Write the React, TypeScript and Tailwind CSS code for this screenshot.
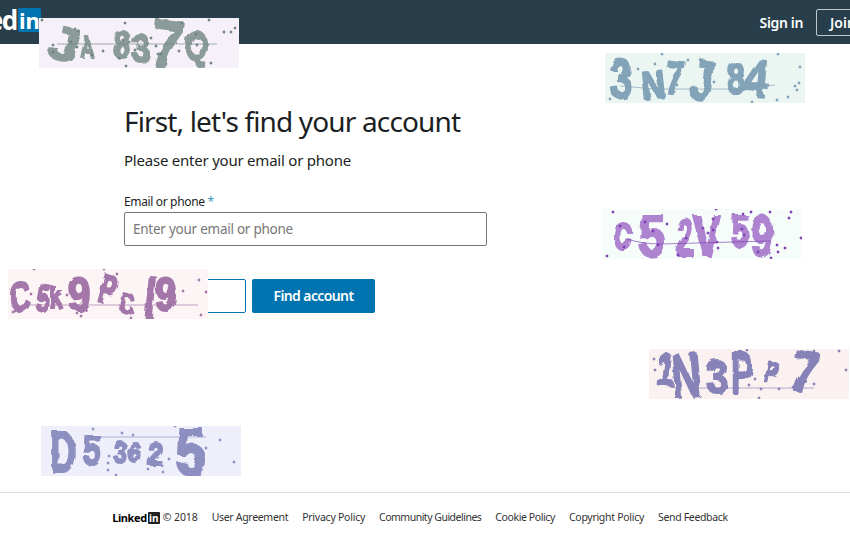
const captchaFont = "'Liberation Sans', sans-serif"

type Glyph = [string, number, number, number, number?, number?]
type Dot = [number, number]

type CaptchaProps = {
  seed: number
  className: string
  bg: string
  ink: string
  dotInk: string
  glyphs: Glyph[]
  line: string
  dots: Dot[]
}

function Captcha({ seed, className, bg, ink, dotInk, glyphs, line, dots }: CaptchaProps) {
  const warpId = `warp-${seed}`
  return (
    <div className={`absolute h-[50px] w-[200px] ${className}`}>
      <svg width="200" height="50" viewBox="0 0 200 50" className="block">
        <defs>
          <filter id={warpId} x="-10%" y="-10%" width="120%" height="120%">
            <feTurbulence type="fractalNoise" baseFrequency="0.07" numOctaves="2" seed={seed} />
            <feDisplacementMap in="SourceGraphic" scale="6" />
            <feGaussianBlur stdDeviation="0.35" />
          </filter>
        </defs>
        <rect width="200" height="50" fill={bg} />
        <g filter={`url(#${warpId})`}>
          {glyphs.map(([ch, x, y, size, rot = 0, sx = 1], i) => (
            <text
              key={i}
              transform={`translate(${x} ${y}) rotate(${rot}) scale(${sx} 1)`}
              fontFamily={captchaFont}
              fontWeight="700"
              fontSize={size}
              textAnchor="middle"
              fill={ink}
              stroke={ink}
              strokeWidth="2.2"
              strokeLinejoin="round"
            >
              {ch}
            </text>
          ))}
        </g>
        <path d={line} fill="none" stroke={dotInk} strokeWidth="1" opacity="0.65" />
        {dots.map(([x, y], i) => (
          <rect key={i} x={x - 1.2} y={y - 1.2} width="2.4" height="2.4" fill={dotInk} transform={`rotate(45 ${x} ${y})`} />
        ))}
      </svg>
    </div>
  )
}

const footerLinks = [
  { label: "User Agreement", tracking: "tracking-[-0.31px]" },
  { label: "Privacy Policy", tracking: "tracking-[-0.24px]" },
  { label: "Community Guidelines", tracking: "tracking-[-0.5px]" },
  { label: "Cookie Policy", tracking: "tracking-[-0.4px]" },
  { label: "Copyright Policy", tracking: "tracking-[-0.29px]" },
  { label: "Send Feedback", tracking: "tracking-[-0.33px]" },
]

export default function App() {
  return (
    <div className="relative flex h-[540px] w-[850px] flex-col overflow-hidden bg-white font-['Noto_Sans',sans-serif] text-[#1b1f23]">
      <header className="flex h-[44px] shrink-0 items-center bg-[#283e4a]">
        <div className="mb-[4px] ml-[-62px] flex items-center">
          <span className="text-[26px] leading-none font-bold tracking-[-1.4px] text-white">Linked</span>
          <span className="ml-[1px] flex h-[24px] w-[23px] items-center justify-center rounded-[2px] bg-[#0073b1] text-[22px] leading-none font-bold text-white">
            in
          </span>
        </div>
        <nav className="ml-auto flex items-center">
          <a className="mr-[13px] text-[14px] font-semibold tracking-[-0.35px] text-white">Sign in</a>
          <a className="mr-[-60px] flex h-[27px] w-[94px] items-center justify-start rounded-[2px] border border-[#c0c8cc] pl-[13px] text-[14px] font-semibold whitespace-nowrap text-white">
            Join now
          </a>
        </nav>
      </header>

      <main className="flex-1 pt-[59px] pl-[124px]">
        <h1 className="text-[28px] leading-[36px] tracking-[-0.85px] text-[#1b1f23]">First, let's find your account</h1>
        <p className="mt-[11px] text-[15px] leading-[20px] tracking-[-0.225px]">Please enter your email or phone</p>
        <label className="mt-[24px] block text-[12px] leading-[16px] tracking-[-0.35px]">
          Email or phone <span className="text-[#3b94c4]">*</span>
        </label>
        <input
          placeholder="Enter your email or phone"
          className="mt-[2px] block h-[34px] w-[363px] rounded-[2px] border border-[#777] px-[8px] text-[13.5px] tracking-[-0.25px] placeholder:text-[#777]"
        />
        <div className="mt-[33px] flex gap-[6px]">
          <button className="h-[34px] w-[122px] rounded-[2px] border border-[#0073b1] text-[14px] font-semibold text-[#0073b1]">
            Back
          </button>
          <button className="h-[34px] w-[123px] rounded-[2px] bg-[#0073b1] pb-[2px] text-[14px] font-semibold tracking-[-0.6px] text-white">
            Find account
          </button>
        </div>
      </main>

      <footer className="flex h-[48px] shrink-0 items-center justify-center gap-[14px] border-t border-[#dddddd] pt-[2px] pr-[10px] text-[10.5px] tracking-[-0.1px] text-[#333]">
        <div className="flex items-center gap-[3px]">
          <div className="flex items-center">
            <span className="text-[11px] leading-none font-bold tracking-[-0.4px] text-black">Linked</span>
            <span className="ml-[1px] flex h-[12px] w-[12px] items-center justify-center rounded-[1px] bg-[#222] text-[10px] leading-none font-bold text-white">
              in
            </span>
          </div>
          <span>© 2018</span>
        </div>
        {footerLinks.map((link) => (
          <a key={link.label} className={`whitespace-nowrap ${link.tracking}`}>
            {link.label}
          </a>
        ))}
      </footer>

      <Captcha
        seed={3}
        className="top-[18px] left-[39px]"
        bg="#f6f0f9"
        ink="#8b9b9a"
        dotInk="#6f8482"
        glyphs={[
          ["J", 22, 42, 48, 12, 1.1],
          ["A", 48, 39, 30, 0, 0.6],
          ["8", 83, 40, 38, 0, 0.85],
          ["3", 102, 44, 38, 0, 0.85],
          ["7", 125, 50, 68, 8, 0.85],
          ["Q", 158, 42, 40, 0, 0.75],
        ]}
        line="M18 26 L178 26"
        dots={[[3, 2], [86, 5], [143, 5], [170, 2], [36, 11], [39, 13], [196, 10], [185, 14], [192, 14], [14, 27], [32, 24], [38, 29], [14, 34], [53, 37], [64, 33], [84, 22], [90, 24], [96, 32], [112, 20], [117, 28], [122, 36], [140, 33], [158, 27], [157, 16], [80, 40], [172, 45], [87, 48], [119, 36]]}
      />
      <Captcha
        seed={7}
        className="top-[53px] left-[605px]"
        bg="#ebf5f1"
        ink="#83a3b8"
        dotInk="#7fa0b6"
        glyphs={[
          ["3", 16, 45, 56, 0, 0.72],
          ["N", 50, 46, 40, -6, 0.8],
          ["7", 68, 40, 46, 6, 0.8],
          ["J", 95, 46, 56, 6, 0.8],
          ["8", 131, 41, 44, 0, 0.7],
          ["4", 150, 43, 52, 5, 0.85],
        ]}
        line="M15 33 L50 36 L130 36 L170 32"
        dots={[[5, 46], [33, 16], [50, 11], [57, 1], [83, 7], [105, 25], [109, 29], [72, 32], [195, 14], [194, 30], [190, 33], [192, 37], [183, 44], [172, 47], [173, 1], [147, 49], [55, 32]]}
      />
      <Captcha
        seed={11}
        className="top-[209px] left-[602px]"
        bg="#f5fcf9"
        ink="#ae83d0"
        dotInk="#7b3fb5"
        glyphs={[
          ["c", 21, 41, 50, 0, 0.7],
          ["5", 50, 47, 60, 0, 0.8],
          ["2", 83, 46, 52, 0, 0.6],
          ["V", 105, 47, 58, 0, 0.7],
          ["5", 138, 38, 46, 0, 0.7],
          ["9", 160, 47, 58, 0, 0.7],
        ]}
        line="M25 30 Q40 35 60 35 L168 32"
        dots={[[11, 3], [18, 17], [43, 13], [51, 22], [65, 15], [22, 38], [5, 47], [56, 36], [76, 46], [84, 29], [101, 19], [111, 10], [111, 21], [106, 24], [115, 33], [116, 39], [141, 5], [149, 3], [168, 3], [189, 3], [187, 9], [140, 20], [142, 26], [175, 36], [183, 39], [176, 43], [156, 43], [199, 29], [169, 49], [114, 0]]}
      />
      <Captcha
        seed={5}
        className="top-[269px] left-[8px]"
        bg="#fdf4f6"
        ink="#a477aa"
        dotInk="#a477aa"
        glyphs={[
          ["C", 12, 42, 42, 0, 0.7],
          ["5", 33, 42, 38, 8, 0.6],
          ["k", 48, 39, 30, 0, 0.8],
          ["9", 71, 42, 48, 0, 0.85],
          ["P", 97, 34, 40, 15, 0.65],
          ["C", 117, 44, 28, 10, 0.7],
          ["l", 140, 49, 58, 6, 0.7],
          ["9", 158, 42, 48, 0, 0.8],
        ]}
        line="M20 36 L190 36"
        dots={[[26, 0], [96, 0], [109, 5], [191, 11], [198, 23], [175, 22], [23, 25], [52, 25], [59, 26], [52, 34], [123, 26], [7, 42], [5, 43], [69, 44], [73, 47], [125, 44], [123, 49], [193, 46], [45, 37]]}
      />
      <Captcha
        seed={13}
        className="top-[426px] left-[41px]"
        bg="#efeffc"
        ink="#8c8fc0"
        dotInk="#8c8fc0"
        glyphs={[
          ["D", 22, 46, 58, 0, 0.6],
          ["5", 51, 39, 42, 0, 0.8],
          ["3", 79, 37, 32, 0, 0.75],
          ["6", 93, 36, 30, 0, 0.8],
          ["2", 114, 39, 34, 0, 0.8],
          ["5", 150, 49, 66, 0, 0.8],
        ]}
        line="M50 11 L165 11"
        dots={[[134, 0], [52, 3], [81, 7], [92, 9], [179, 14], [193, 36], [165, 22], [68, 30], [67, 37], [67, 44], [116, 37], [122, 46], [107, 43], [75, 49], [128, 33]]}
      />
      <Captcha
        seed={19}
        className="top-[349px] left-[649px]"
        bg="#fbf1f1"
        ink="#8783b8"
        dotInk="#8783b8"
        glyphs={[
          ["1", 15, 36, 44, 6, 0.7],
          ["N", 39, 48, 62, -5, 0.65],
          ["3", 68, 44, 46, 0, 0.85],
          ["P", 93, 44, 58, 0, 0.55],
          ["P", 121, 34, 30, 12, 0.7],
          ["7", 152, 43, 58, 10, 0.85],
        ]}
        line="M42 39 L165 39"
        dots={[[5, 10], [6, 21], [98, 1], [190, 2], [197, 21], [165, 2], [100, 36], [106, 30], [112, 40], [130, 40], [144, 38], [110, 49], [165, 35]]}
      />
    </div>
  )
}
